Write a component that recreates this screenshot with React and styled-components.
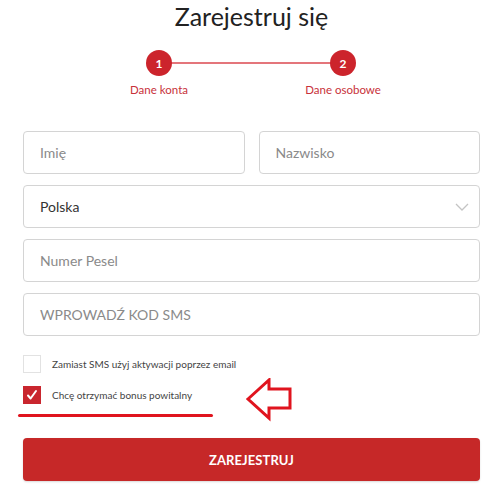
import React from 'react';
import styled, {createGlobalStyle} from 'styled-components';

const GlobalStyle = createGlobalStyle`
  html, body {
    margin: 0;
    padding: 0;
    background: #fff;
  }
  body {
    font-family: Lato, "Open Sans", Arial, sans-serif;
    color: #333;
  }
`;

const Page = styled.div`
  width: 500px;
  height: 488px;
  box-sizing: border-box;
  padding: 0 20px 0 23px;
  overflow: hidden;
`;

const Title = styled.h1`
  margin: 0;
  padding-top: 1px;
  text-align: center;
  font-size: 25px;
  line-height: 30px;
  font-weight: 400;
  color: #222;
`;

const Steps = styled.div`
  display: flex;
  justify-content: space-between;
  margin: 19px 113px 0 112px;
  position: relative;
`;

const StepLine = styled.div`
  position: absolute;
  top: 12px;
  left: 24px;
  right: 24px;
  height: 2px;
  background: #e4757b;
`;

const Step = styled.div`
  display: flex;
  flex-direction: column;
  align-items: center;
  width: 48px;
  position: relative;
`;

const StepCircle = styled.div`
  width: 26px;
  height: 26px;
  border-radius: 50%;
  background: #cc242c;
  color: #fff;
  font-size: 12px;
  font-weight: 700;
  display: flex;
  align-items: center;
  justify-content: center;
`;

const StepLabel = styled.div`
  margin-top: 7px;
  white-space: nowrap;
  font-size: 11.5px;
  color: #c8313a;
`;

const Form = styled.div`
  margin-top: 35px;
  display: flex;
  flex-direction: column;
  gap: 11px;
`;

const Row = styled.div`
  display: grid;
  grid-template-columns: 1fr 1fr;
  gap: 14px;
`;

const Field = styled.div`
  position: relative;
  height: 43px;
  box-sizing: border-box;
  border: 1px solid #d4d4d4;
  border-radius: 4px;
  display: flex;
  align-items: center;
  padding-left: 16px;
  font-size: 14px;
  color: ${p => (p.$filled ? '#333' : '#8a8a8a')};
`;

const Chevron = styled.svg`
  position: absolute;
  right: 10px;
  top: 16px;
`;

const Checks = styled.div`
  margin-top: 19px;
  display: flex;
  flex-direction: column;
  gap: 13px;
`;

const CheckRow = styled.div`
  display: flex;
  align-items: center;
  gap: 11px;
  font-size: 10px;
  color: #444;
  position: relative;
`;

const Box = styled.div`
  width: 18px;
  height: 18px;
  box-sizing: border-box;
  border: 1px solid ${p => (p.$checked ? '#c9262e' : '#e2e2e2')};
  background: ${p => (p.$checked ? '#c9262e' : '#fff')};
  display: flex;
  align-items: center;
  justify-content: center;
`;

const Underline = styled.div`
  position: absolute;
  left: -5px;
  top: 28px;
  width: 195px;
  height: 3px;
  border-radius: 2px;
  background: #e0141e;
`;

const Arrow = styled.svg`
  position: absolute;
  left: 223px;
  top: -8px;
`;

const Submit = styled.button`
  margin-top: 34px;
  width: 100%;
  height: 43px;
  border: none;
  border-radius: 4px;
  background: #c62828;
  color: #fff;
  font-family: inherit;
  font-size: 13px;
  font-weight: 700;
  letter-spacing: 0.1px;
  box-shadow: 0 1px 2px rgba(0, 0, 0, 0.15);
`;

export default function App() {
    return (
        <Page>
            <GlobalStyle/>
            <Title>Zarejestruj się</Title>
            <Steps>
                <StepLine/>
                <Step>
                    <StepCircle>1</StepCircle>
                    <StepLabel>Dane konta</StepLabel>
                </Step>
                <Step>
                    <StepCircle>2</StepCircle>
                    <StepLabel>Dane osobowe</StepLabel>
                </Step>
            </Steps>
            <Form>
                <Row>
                    <Field>Imię</Field>
                    <Field>Nazwisko</Field>
                </Row>
                <Field $filled>
                    Polska
                    <Chevron width="14" height="10" viewBox="0 0 14 10">
                        <path d="M1 2l6 6 6-6" fill="none" stroke="#c4c4c4" strokeWidth="1.3"/>
                    </Chevron>
                </Field>
                <Field>Numer Pesel</Field>
                <Field>WPROWADŹ KOD SMS</Field>
            </Form>
            <Checks>
                <CheckRow>
                    <Box/>
                    Zamiast SMS użyj aktywacji poprzez email
                </CheckRow>
                <CheckRow>
                    <Box $checked>
                        <svg width="12" height="12" viewBox="0 0 12 12">
                            <path d="M2 6.5l2.6 3L10 2" fill="none" stroke="#fff" strokeWidth="2" strokeLinecap="round" strokeLinejoin="round"/>
                        </svg>
                    </Box>
                    Chcę otrzymać bonus powitalny
                    <Underline/>
                    <Arrow width="48" height="44" viewBox="0 0 48 44">
                        <path d="M2 21L23 2V11H44V30H23V40Z" fill="none" stroke="#e0141e" strokeWidth="3" strokeLinejoin="miter"/>
                    </Arrow>
                </CheckRow>
            </Checks>
            <Submit>ZAREJESTRUJ</Submit>
        </Page>
    );
}
